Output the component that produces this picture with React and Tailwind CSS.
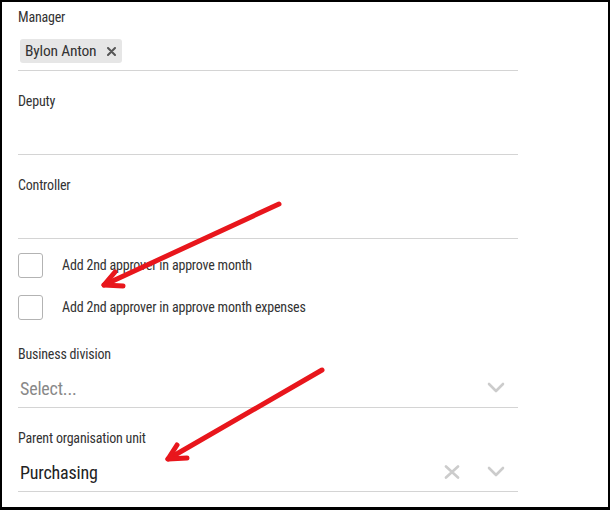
import React from 'react';

const font = "font-['Roboto',sans-serif] font-stretch-[85%] tracking-[-0.012em]";

function Label({ children }) {
  return <div className="h-4 text-[14px] leading-4 text-[#333]">{children}</div>;
}

function Chevron() {
  return (
    <svg width="44" height="12" viewBox="0 0 44 12" className="shrink-0">
      <polyline points="15,2 22,9 29,2" fill="none" stroke="#cccccc" strokeWidth="2.6" strokeLinecap="round" strokeLinejoin="round" />
    </svg>
  );
}

function Cross() {
  return (
    <svg width="44" height="14" viewBox="0 0 44 14" className="shrink-0">
      <path d="M16 1.5 L28 12.5 M28 1.5 L16 12.5" fill="none" stroke="#cccccc" strokeWidth="2.6" strokeLinecap="round" />
    </svg>
  );
}

function Field({ label, children, first }) {
  return (
    <div className={first ? '' : 'mt-[22px]'}>
      <Label>{label}</Label>
      <div className="h-[46px] flex items-center border-b border-[#d4d4d4] pt-[7px] pl-[2px]">{children}</div>
    </div>
  );
}

function Checkbox({ label }) {
  return (
    <div className="h-[42px] flex items-start">
      <div className="w-[25px] h-[25px] rounded-[3px] border border-[#b3b3b3] bg-white shrink-0" />
      <span className="ml-[19px] h-[25px] flex items-center text-[14px] text-[#333]">{label}</span>
    </div>
  );
}

function Arrow({ line, barbs }) {
  return (
    <g fill="none" stroke="#e8161c" strokeWidth="5" strokeLinecap="round" strokeLinejoin="round">
      <line x1={line[0]} y1={line[1]} x2={line[2]} y2={line[3]} />
      <polyline points={barbs} />
    </g>
  );
}

export default function App() {
  return (
    <div className={`relative w-[610px] h-[510px] bg-white ${font}`}>
      <div className="w-full h-full border-t-2 border-l-2 border-r-2 border-b-[3px] border-black pl-4 pt-[7px]">
        <div className="w-[500px]">
          <Field label="Manager" first>
            <div className="h-6 flex items-center rounded-[3px] bg-[#e6e6e6] pl-[5px] pr-[6px]">
              <span className="text-[15.5px] text-[#333] leading-6">Bylon Anton</span>
              <svg width="9" height="9" viewBox="0 0 9 9" className="ml-[11px]">
                <path d="M1 1 L8 8 M8 1 L1 8" stroke="#555" strokeWidth="2" strokeLinecap="round" />
              </svg>
            </div>
          </Field>

          <Field label="Deputy" />
          <Field label="Controller" />

          <div className="mt-[14px]">
            <Checkbox label="Add 2nd approver in approve month" />
            <Checkbox label="Add 2nd approver in approve month expenses" />
          </div>

          <div className="mt-[-13px]">
            <Field label="Business division">
              <span className="flex-1 text-[18px] text-[#888]">Select...</span>
              <Chevron />
            </Field>
          </div>

          <Field label="Parent organisation unit">
            <span className="flex-1 text-[18px] text-[#222]">Purchasing</span>
            <Cross />
            <Chevron />
          </Field>
        </div>
      </div>

      <svg className="absolute left-0 top-0 pointer-events-none" width="610" height="510" viewBox="0 0 610 510">
        <Arrow line={[279, 204, 104, 285]} barbs="115,272 104,285 123,286" />
        <Arrow line={[322, 370, 168, 459]} barbs="177,445 168,459 187,458" />
      </svg>
    </div>
  );
}
